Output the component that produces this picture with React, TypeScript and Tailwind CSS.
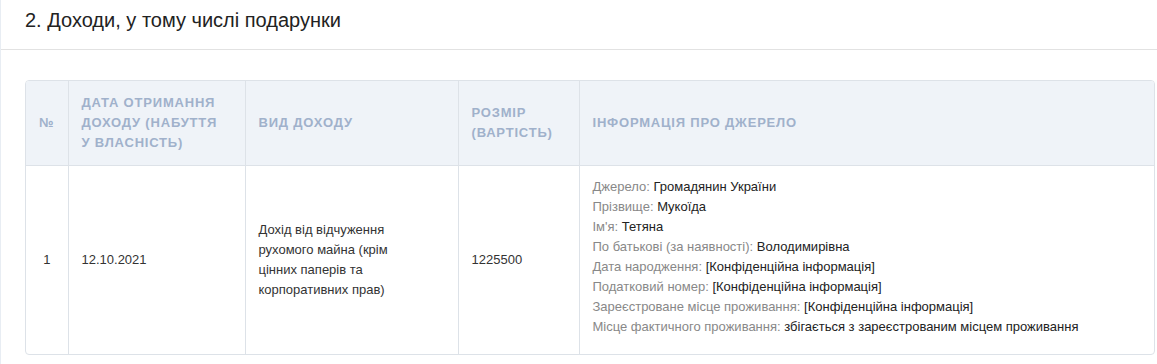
import React from 'react';

const info: [string, string][] = [
  ['Джерело', 'Громадянин України'],
  ['Прізвище', 'Мукоїда'],
  ["Ім'я", 'Тетяна'],
  ['По батькові (за наявності)', 'Володимирівна'],
  ['Дата народження', '[Конфіденційна інформація]'],
  ['Податковий номер', '[Конфіденційна інформація]'],
  ['Зареєстроване місце проживання', '[Конфіденційна інформація]'],
  ['Місце фактичного проживання', 'збігається з зареєстрованим місцем проживання'],
];

const th = 'border-l border-[#dde2e8] pl-[13px] pr-[16px] py-[12px] text-left align-middle text-[13px] font-bold uppercase leading-[20px] tracking-[0.8px] text-[#a0b1cb]';
const td = 'border-l border-[#dde2e8] px-[13px] py-[14px] align-middle text-[13px] leading-[20px] text-[#333]';

export default function App() {
  return (
    <div className="w-[1157px] h-[364px] bg-white [font-family:'Liberation_Sans',Arial,sans-serif] overflow-hidden">
      <div className="border-l border-[#e8edf3] h-full">
        <div className="h-[50px] border-b border-[#e2e2e2] pl-[24px] pt-[9px]">
          <h2 className="text-[20px] leading-[22px] font-normal text-[#222]">2. Доходи, у тому числі подарунки</h2>
        </div>
        <div className="ml-[24px] mr-[2px] mt-[30px] rounded-[4px] border border-[#dde2e8] overflow-hidden">
          <table className="w-full table-fixed border-collapse">
            <colgroup>
              <col className="w-[42px]" />
              <col className="w-[177px]" />
              <col className="w-[213px]" />
              <col className="w-[121px]" />
              <col />
            </colgroup>
            <thead>
              <tr className="bg-[#eff3f8] border-b border-[#dde2e8]">
                <th className={th + ' !border-l-0 !text-center !px-0'}>№</th>
                <th className={th}>Дата отримання доходу (набуття у власність)</th>
                <th className={th}>Вид доходу</th>
                <th className={th}>Розмір (вартість)</th>
                <th className={th}>Інформація про джерело</th>
              </tr>
            </thead>
            <tbody>
              <tr>
                <td className={td + ' !border-l-0 !text-center !px-0'}>1</td>
                <td className={td}>12.10.2021</td>
                <td className={td}>
                  <div className="max-w-[150px]">Дохід від відчуження рухомого майна (крім цінних паперів та корпоративних прав)</div>
                </td>
                <td className={td}>1225500</td>
                <td className={td + ' !pt-[11px] !pb-[17px]'}>
                  {info.map(([label, value]) => (
                    <div key={label}>
                      <span className="text-[#888]">{label}:</span> <span className="text-[#222]">{value}</span>
                    </div>
                  ))}
                </td>
              </tr>
            </tbody>
          </table>
        </div>
      </div>
    </div>
  );
}
